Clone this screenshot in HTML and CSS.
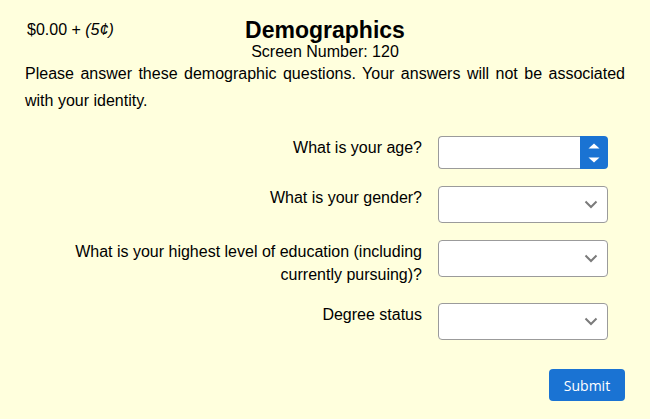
FILE: index.html
```html
<!DOCTYPE html>
<html lang="en">
<head>
<meta charset="utf-8">
<title>Demographics</title>
<link rel="stylesheet" href="styles.css">
</head>
<body>
<div class="page">
  <header class="header">
    <div class="money">$0.00 + <em>(5¢)</em></div>
    <div class="titles">
      <h1 class="title">Demographics</h1>
      <div class="screen">Screen Number: 120</div>
    </div>
    <div></div>
  </header>
  <p class="intro">Please answer these demographic questions. Your answers will not be associated with your identity.</p>
  <form class="form">
    <label class="label" for="age">What is your age?</label>
    <div class="number">
      <input class="number-input" id="age" type="text">
      <span class="spinner">
        <svg width="12" height="22" viewBox="0 0 12 22"><path d="M0.5 6.5 L6 1.5 L11.5 6.5 Z" fill="#fff"/><path d="M0.5 15.5 L6 20.5 L11.5 15.5 Z" fill="#fff"/></svg>
      </span>
    </div>

    <label class="label" for="gender">What is your gender?</label>
    <div class="select" id="gender">
      <svg class="chev" width="14" height="9" viewBox="0 0 14 9"><path d="M1.5 1.5 L7 7 L12.5 1.5" fill="none" stroke="#7b7b7b" stroke-width="2"/></svg>
    </div>

    <label class="label" for="edu">What is your highest level of education (including currently pursuing)?</label>
    <div class="select" id="edu">
      <svg class="chev" width="14" height="9" viewBox="0 0 14 9"><path d="M1.5 1.5 L7 7 L12.5 1.5" fill="none" stroke="#7b7b7b" stroke-width="2"/></svg>
    </div>

    <label class="label" for="deg">Degree status</label>
    <div class="select" id="deg">
      <svg class="chev" width="14" height="9" viewBox="0 0 14 9"><path d="M1.5 1.5 L7 7 L12.5 1.5" fill="none" stroke="#7b7b7b" stroke-width="2"/></svg>
    </div>
  </form>
  <div class="actions">
    <button class="submit" type="button">Submit</button>
  </div>
</div>
</body>
</html>
```

FILE: styles.css
```css
html, body {
  margin: 0;
  padding: 0;
  background: #ffffdd;
}
body {
  font-family: "Liberation Sans", Arial, sans-serif;
  color: #000;
  font-size: 16px;
}
.page {
  padding: 0 25px;
  width: 600px;
}
.header {
  display: grid;
  grid-template-columns: 1fr auto 1fr;
  padding-top: 16px;
}
.money {
  font-size: 16px;
  line-height: 28px;
  padding-left: 2px;
}
.titles {
  text-align: center;
}
.title {
  margin: 0;
  font-size: 23px;
  font-weight: bold;
  line-height: 28px;
}
.screen {
  font-size: 16px;
  line-height: 16px;
}
.intro {
  margin: 0;
  font-size: 16px;
  line-height: 27px;
  text-align: justify;
}
.form {
  margin-top: 22px;
  display: grid;
  grid-template-columns: 1fr 170px;
  column-gap: 16px;
  row-gap: 17px;
  padding-right: 17px;
  align-items: start;
}
.label {
  text-align: right;
  font-size: 16px;
  line-height: 23px;
  padding-left: 30px;
}
.number {
  display: flex;
  height: 33px;
  box-sizing: border-box;
}
.number-input {
  flex: 1;
  min-width: 0;
  margin: 0;
  border: 1px solid #9b9b9b;
  border-right: none;
  border-radius: 4px 0 0 4px;
  background: #fff;
  padding: 0;
}
.spinner {
  width: 28px;
  background: #1a73d3;
  border-radius: 0 4px 4px 0;
  display: flex;
  align-items: center;
  justify-content: center;
}
.select {
  height: 37px;
  box-sizing: border-box;
  border: 1px solid #9b9b9b;
  border-radius: 4px;
  background: #fff;
  display: flex;
  align-items: center;
  justify-content: flex-end;
  padding-right: 9px;
}
.actions {
  display: flex;
  justify-content: flex-end;
  margin-top: 29px;
}
.submit {
  width: 76px;
  height: 32px;
  border: none;
  border-radius: 4px;
  background: #1a73d3;
  color: #fff;
  font-family: "Open Sans", sans-serif;
  font-size: 14px;
  font-weight: 500;
  padding: 0;
}
```
